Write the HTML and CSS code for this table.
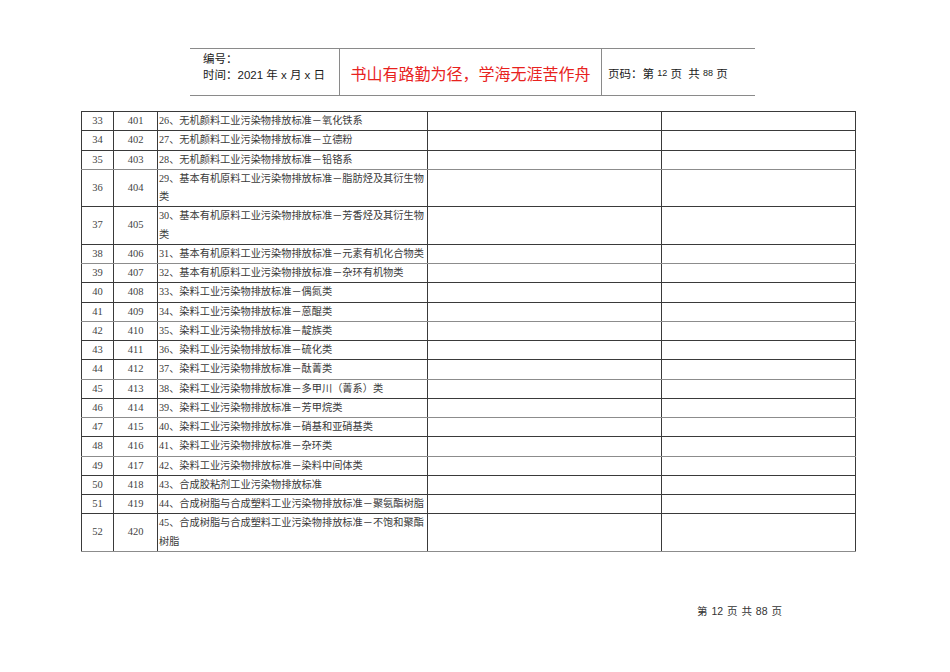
FILE: index.html
```html
<!DOCTYPE html>
<html lang="zh">
<head>
<meta charset="utf-8">
<title>第12页</title>
<link rel="stylesheet" href="styles.css">
</head>
<body>
<div class="page">
  <div class="header">
    <div class="h-left">
      <div>编号：</div>
      <div>时间：2021 年 x 月 x 日</div>
    </div>
    <div class="h-mid">书山有路勤为径，学海无涯苦作舟</div>
    <div class="h-right">页码：第 <span class="sm">12</span> 页&nbsp; 共 <span class="sm">88</span> 页</div>
  </div>

  <table class="grid">
    <colgroup>
      <col class="c1"><col class="c2"><col class="c3"><col class="c4"><col class="c5">
    </colgroup>
    <tbody>
      <tr><td class="num">33</td><td class="num">401</td><td class="txt">26、无机颜料工业污染物排放标准－氧化铁系</td><td></td><td></td></tr>
      <tr><td class="num">34</td><td class="num">402</td><td class="txt">27、无机颜料工业污染物排放标准－立德粉</td><td></td><td></td></tr>
      <tr class="lt"><td class="num">35</td><td class="num">403</td><td class="txt">28、无机颜料工业污染物排放标准－铅铬系</td><td></td><td></td></tr>
      <tr><td class="num">36</td><td class="num">404</td><td class="txt">29、基本有机原料工业污染物排放标准－脂肪烃及其衍生物类</td><td></td><td></td></tr>
      <tr><td class="num">37</td><td class="num">405</td><td class="txt">30、基本有机原料工业污染物排放标准－芳香烃及其衍生物类</td><td></td><td></td></tr>
      <tr class="lt"><td class="num">38</td><td class="num">406</td><td class="txt">31、基本有机原料工业污染物排放标准－元素有机化合物类</td><td></td><td></td></tr>
      <tr><td class="num">39</td><td class="num">407</td><td class="txt">32、基本有机原料工业污染物排放标准－杂环有机物类</td><td></td><td></td></tr>
      <tr><td class="num">40</td><td class="num">408</td><td class="txt">33、染料工业污染物排放标准－偶氮类</td><td></td><td></td></tr>
      <tr class="lt"><td class="num">41</td><td class="num">409</td><td class="txt">34、染料工业污染物排放标准－蒽醌类</td><td></td><td></td></tr>
      <tr><td class="num">42</td><td class="num">410</td><td class="txt">35、染料工业污染物排放标准－靛族类</td><td></td><td></td></tr>
      <tr><td class="num">43</td><td class="num">411</td><td class="txt">36、染料工业污染物排放标准－硫化类</td><td></td><td></td></tr>
      <tr class="lt"><td class="num">44</td><td class="num">412</td><td class="txt">37、染料工业污染物排放标准－酞菁类</td><td></td><td></td></tr>
      <tr><td class="num">45</td><td class="num">413</td><td class="txt">38、染料工业污染物排放标准－多甲川（菁系）类</td><td></td><td></td></tr>
      <tr class="lt"><td class="num">46</td><td class="num">414</td><td class="txt">39、染料工业污染物排放标准－芳甲烷类</td><td></td><td></td></tr>
      <tr><td class="num">47</td><td class="num">415</td><td class="txt">40、染料工业污染物排放标准－硝基和亚硝基类</td><td></td><td></td></tr>
      <tr class="lt"><td class="num">48</td><td class="num">416</td><td class="txt">41、染料工业污染物排放标准－杂环类</td><td></td><td></td></tr>
      <tr><td class="num">49</td><td class="num">417</td><td class="txt">42、染料工业污染物排放标准－染料中间体类</td><td></td><td></td></tr>
      <tr><td class="num">50</td><td class="num">418</td><td class="txt">43、合成胶粘剂工业污染物排放标准</td><td></td><td></td></tr>
      <tr><td class="num">51</td><td class="num">419</td><td class="txt">44、合成树脂与合成塑料工业污染物排放标准－聚氨酯树脂</td><td></td><td></td></tr>
      <tr class="lt"><td class="num">52</td><td class="num">420</td><td class="txt">45、合成树脂与合成塑料工业污染物排放标准－不饱和聚酯树脂</td><td></td><td></td></tr>
    </tbody>
  </table>

  <div class="footer">第 12 页 共 88 页</div>
</div>
</body>
</html>
```

FILE: styles.css
```css
html, body {
  margin: 0;
  padding: 0;
  background: #ffffff;
}

.page {
  width: 950px;
  height: 672px;
  padding-top: 48px;
  box-sizing: border-box;
}

.header {
  margin-left: 190px;
  width: 565px;
  height: 48px;
  box-sizing: border-box;
  border-top: 1px solid #8a8a8a;
  border-bottom: 1px solid #8a8a8a;
  display: grid;
  grid-template-columns: 149px 263px 153px;
  font-family: "Liberation Sans", "Noto Sans CJK SC", sans-serif;
  color: #1a1a1a;
}

.h-left {
  padding: 2px 0 0 13px;
  font-size: 11.5px;
  line-height: 16px;
}

.h-mid {
  border-left: 1px solid #8a8a8a;
  border-right: 1px solid #8a8a8a;
  display: flex;
  align-items: center;
  justify-content: center;
  color: #e8221e;
  font-size: 16px;
  padding-top: 1px;
}

.h-right {
  display: flex;
  align-items: center;
  padding: 1px 0 0 6px;
  font-size: 11.5px;
  white-space: pre;
}

.sm {
  font-size: 9px;
}

.grid {
  margin: 15px 0 0 81px;
  width: 774px;
  border-collapse: collapse;
  table-layout: fixed;
  font-family: "Liberation Serif", "Noto Sans CJK SC", serif;
  font-size: 10.2px;
  line-height: 18.25px;
  color: #3a3a3a;
}

.c1 { width: 32px; }
.c2 { width: 44px; }
.c3 { width: 270px; }
.c4 { width: 234px; }
.c5 { width: 194px; }

.grid td {
  border: 1px solid #3a3a3a;
  padding: 0;
  vertical-align: middle;
}

.grid tr.lt td {
  border-bottom-color: #8c8c8c;
}

.grid td.num {
  text-align: center;
  font-size: 10.5px;
  color: #444444;
}

.grid td.txt {
  padding-left: 1px;
  text-align: left;
}

.footer {
  margin: 51px 0 0 697px;
  font-family: "Liberation Sans", "Noto Sans CJK SC", sans-serif;
  font-size: 10.5px;
  color: #333333;
  word-spacing: 1px;
}
```
